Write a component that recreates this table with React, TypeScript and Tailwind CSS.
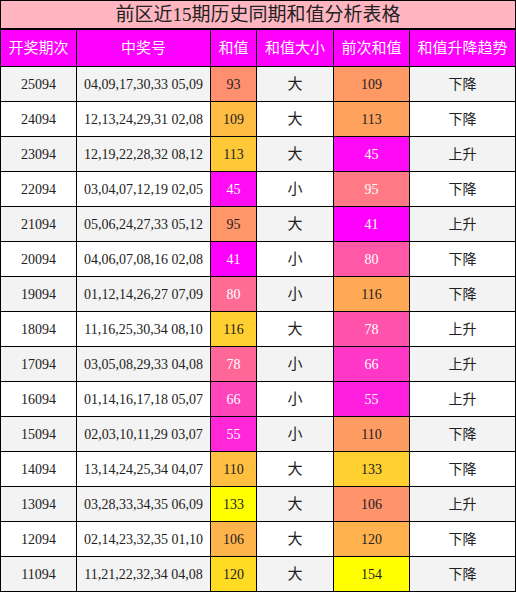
import React from "react";

type Row = [string, string, number, string, number, string];

const rows: Row[] = [
  ["25094", "04,09,17,30,33 05,09", 93, "大", 109, "下降"],
  ["24094", "12,13,24,29,31 02,08", 109, "大", 113, "下降"],
  ["23094", "12,19,22,28,32 08,12", 113, "大", 45, "上升"],
  ["22094", "03,04,07,12,19 02,05", 45, "小", 95, "下降"],
  ["21094", "05,06,24,27,33 05,12", 95, "大", 41, "上升"],
  ["20094", "04,06,07,08,16 02,08", 41, "小", 80, "下降"],
  ["19094", "01,12,14,26,27 07,09", 80, "小", 116, "下降"],
  ["18094", "11,16,25,30,34 08,10", 116, "大", 78, "上升"],
  ["17094", "03,05,08,29,33 04,08", 78, "小", 66, "上升"],
  ["16094", "01,14,16,17,18 05,07", 66, "小", 55, "上升"],
  ["15094", "02,03,10,11,29 03,07", 55, "小", 110, "下降"],
  ["14094", "13,14,24,25,34 04,07", 110, "大", 133, "下降"],
  ["13094", "03,28,33,34,35 06,09", 133, "大", 106, "上升"],
  ["12094", "02,14,23,32,35 01,10", 106, "大", 120, "下降"],
  ["11094", "11,21,22,32,34 04,08", 120, "大", 154, "下降"],
];

const c3 = rows.map((r) => r[2]);
const c5 = rows.map((r) => r[4]);
const range = (a: number[]) => [Math.min(...a), Math.max(...a)];
const [min3, max3] = range(c3);
const [min5, max5] = range(c5);

function scale(v: number, min: number, max: number) {
  const t = (v - min) / (max - min);
  const g = Math.round(255 * t);
  const b = Math.round(255 * (1 - t));
  return {
    style: { backgroundColor: `rgb(255,${g},${b})` },
    light: t < 0.5,
  };
}

const cell = "flex items-center justify-center border-r border-b border-black";

export default function App() {
  return (
    <div className="w-[516px] h-[592px] bg-white font-['Liberation_Serif','Noto_Sans_CJK_SC',serif]">
      <div className="border-l border-t border-black w-[516px]">
        <div className="h-[29px] bg-[#FFB6C1] border-r border-b-2 border-black flex items-center justify-center text-[19px] text-[#222] leading-none">
          前区近15期历史同期和值分析表格
        </div>
        <div className="grid grid-cols-[76px_134px_46px_77px_76px_106px] h-[37px] bg-[#FF00FF] text-white text-[15px]">
          {["开奖期次", "中奖号", "和值", "和值大小", "前次和值", "和值升降趋势"].map((h) => (
            <div key={h} className={cell}>
              {h}
            </div>
          ))}
        </div>
        {rows.map((r, i) => {
          const s3 = scale(r[2], min3, max3);
          const s5 = scale(r[4], min5, max5);
          const bg = i % 2 === 0 ? "bg-[#F3F3F3]" : "bg-white";
          return (
            <div
              key={r[0]}
              className={`grid grid-cols-[76px_134px_46px_77px_76px_106px] h-[35px] text-[14px] text-[#222] ${bg}`}
            >
              <div className={cell}>{r[0]}</div>
              <div className={cell}>{r[1]}</div>
              <div className={`${cell} ${s3.light ? "text-white" : "text-[#222]"}`} style={s3.style}>
                {r[2]}
              </div>
              <div className={`${cell} text-[15px]`}>{r[3]}</div>
              <div className={`${cell} ${s5.light ? "text-white" : "text-[#222]"}`} style={s5.style}>
                {r[4]}
              </div>
              <div className={`${cell} text-[14px]`}>{r[5]}</div>
            </div>
          );
        })}
      </div>
    </div>
  );
}
